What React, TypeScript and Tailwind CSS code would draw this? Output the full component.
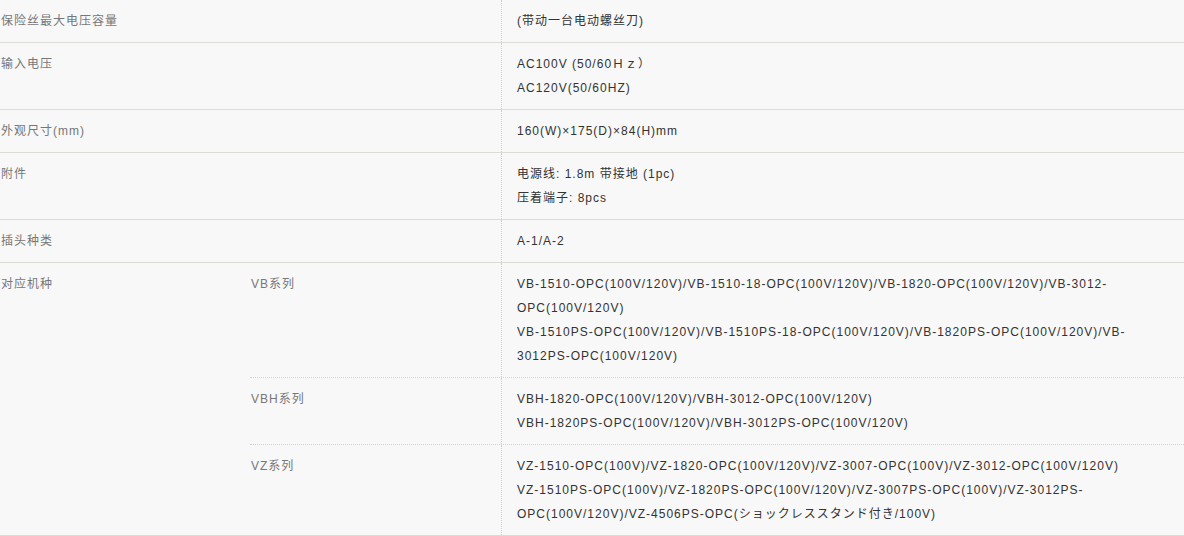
import React from 'react';

type Row = { label: string; lines: string[] };

const rows: Row[] = [
  { label: '保险丝最大电压容量', lines: ['(带动一台电动螺丝刀)'] },
  { label: '输入电压', lines: ['AC100V (50/60Ｈｚ）', 'AC120V(50/60HZ)'] },
  { label: '外观尺寸(mm)', lines: ['160(W)×175(D)×84(H)mm'] },
  { label: '附件', lines: ['电源线: 1.8m 带接地 (1pc)', '压着端子: 8pcs'] },
  { label: '插头种类', lines: ['A-1/A-2'] },
];

const models: Row[] = [
  {
    label: 'VB系列',
    lines: [
      'VB-1510-OPC(100V/120V)/VB-1510-18-OPC(100V/120V)/VB-1820-OPC(100V/120V)/VB-3012-OPC(100V/120V)',
      'VB-1510PS-OPC(100V/120V)/VB-1510PS-18-OPC(100V/120V)/VB-1820PS-OPC(100V/120V)/VB-3012PS-OPC(100V/120V)',
    ],
  },
  {
    label: 'VBH系列',
    lines: ['VBH-1820-OPC(100V/120V)/VBH-3012-OPC(100V/120V)', 'VBH-1820PS-OPC(100V/120V)/VBH-3012PS-OPC(100V/120V)'],
  },
  {
    label: 'VZ系列',
    lines: [
      'VZ-1510-OPC(100V)/VZ-1820-OPC(100V/120V)/VZ-3007-OPC(100V)/VZ-3012-OPC(100V/120V)',
      'VZ-1510PS-OPC(100V)/VZ-1820PS-OPC(100V/120V)/VZ-3007PS-OPC(100V)/VZ-3012PS-OPC(100V/120V)/VZ-4506PS-OPC(ショックレススタンド付き/100V)',
    ],
  },
];

function Value({ lines }: { lines: string[] }) {
  return (
    <div className="flex-1 border-l border-dotted border-[#cfcfcf] py-[9px] pl-[15px] pr-[40px] text-[#333]">
      {lines.map((l) => (
        <p key={l}>{l}</p>
      ))}
    </div>
  );
}

export default function App() {
  return (
    <div className="min-h-screen bg-[#f8f8f8] font-['Liberation_Sans','Noto_Sans_CJK_SC',sans-serif] text-[12px] leading-[24px] tracking-[1px]">
      {rows.map((row) => (
        <div key={row.label} className="flex border-b border-[#dcdcd6]">
          <div className="w-[501px] py-[9px] pl-px text-[#777]">{row.label}</div>
          <Value lines={row.lines} />
        </div>
      ))}

      {/* 对应机种 */}
      <div className="flex border-b border-[#dcdcd6]">
        <div className="w-[250px] py-[9px] pl-px text-[#777]">对应机种</div>
        <div className="flex flex-1 flex-col">
          {models.map((m, i) => (
            <div
              key={m.label}
              className={`flex ${i < models.length - 1 ? 'border-b border-dotted border-[#d4d4d4]' : ''}`}
            >
              <div className="w-[251px] py-[9px] pl-px text-[#777]">{m.label}</div>
              <Value lines={m.lines} />
            </div>
          ))}
        </div>
      </div>
    </div>
  );
}
